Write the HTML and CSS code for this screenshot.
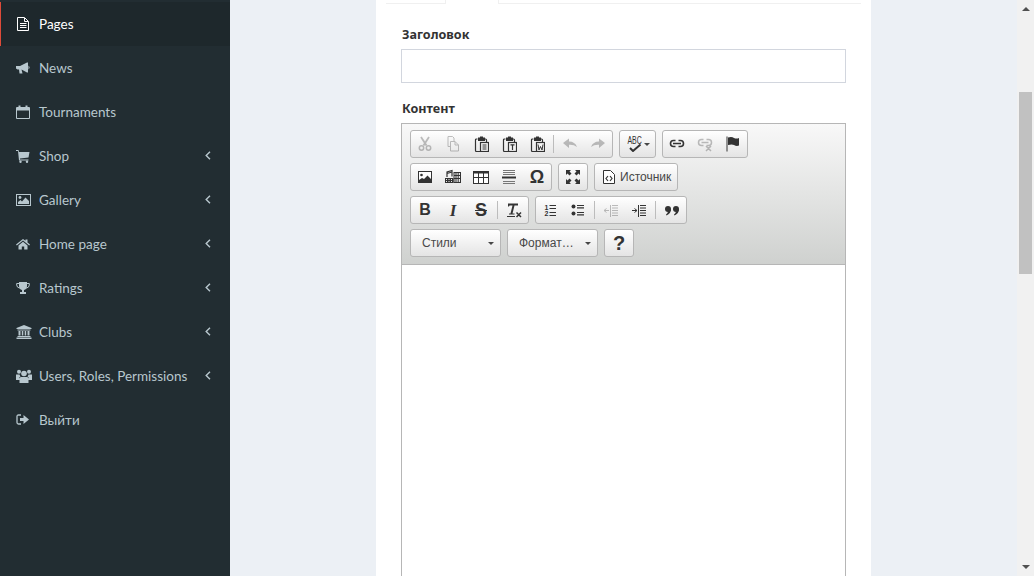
FILE: index.html
```html
<!DOCTYPE html>
<html lang="en">
<head>
    <meta charset="UTF-8">
    <title>Pages</title>
    <link rel="stylesheet" href="styles.css">
</head>
<body>
    <svg class="defs" width="0" height="0">
        <symbol id="clip" viewBox="0 0 16 16">
            <path d="M4.500 3H3.500Q2.500 3 2.500 4V14.500Q2.500 15.500 3.500 15.500H7M11.500 3H12.500Q13.500 3 13.500 4V6" fill="none" stroke="currentColor" stroke-width="1.200"/>
            <path d="M5 1.500H7V.5H10V1.500H12V5H5Z"/>
            <rect x="7.500" y="6.500" width="8" height="9" fill="#f4f4f4" stroke="currentColor" stroke-width="1.200"/>
        </symbol>
    </svg>
    <div class="page">
        <aside class="sidebar">
            <ul class="menu">
                <li class="item active">
                    <svg class="ico" viewBox="0 0 14 14"><path d="M1.500 .5H8.500L12.500 4.500V13.500H1.500ZM8.500 1V4.500H12M4 6.500H10.500M4 8.500H10.500M4 10.500H10.500" fill="none" stroke="currentColor"/></svg>
                    <span class="label">Pages</span>
                </li>
                <li class="item">
                    <svg class="ico" viewBox="0 0 14 14"><path d="M0 5H4L11 1.500H12V11.500H11L5.500 8.500L6.500 12.500H3.500L3 8.500H1.500L0 7.500Z"/><path d="M12.500 4.500Q14.500 6.500 12.500 8.500Z"/></svg>
                    <span class="label">News</span>
                </li>
                <li class="item">
                    <svg class="ico" viewBox="0 0 14 14"><path d="M.5 2.500H13.500V13.500H.5Z" fill="none" stroke="currentColor"/><path d="M1 3H13V5.500H1ZM2.500 .5H4.500V3H2.500ZM9.500 .5H11.500V3H9.500Z"/></svg>
                    <span class="label">Tournaments</span>
                </li>
                <li class="item">
                    <svg class="ico" viewBox="0 0 14 14"><path d="M0 1H2.500L3 3H13.500L12.500 8.500L4 9.500V10.500H12.500V11.500H3L2 2H0Z"/><circle cx="4.500" cy="12.800" r="1.200"/><circle cx="11" cy="12.800" r="1.200"/></svg>
                    <span class="label">Shop</span>
                    <svg class="chev" viewBox="0 0 6 9"><path d="M5 .8L1.200 4.500L5 8.200" fill="none" stroke="currentColor" stroke-width="1.400"/></svg>
                </li>
                <li class="item">
                    <svg class="ico wide" viewBox="0 0 16 14"><rect x=".5" y="1.500" width="14" height="11" fill="none" stroke="currentColor"/><circle cx="4" cy="4.500" r="1.400"/><path d="M2 11V9L4.500 7L6 8.500L9.500 4.500L13 8V11Z"/></svg>
                    <span class="label">Gallery</span>
                    <svg class="chev" viewBox="0 0 6 9"><path d="M5 .8L1.200 4.500L5 8.200" fill="none" stroke="currentColor" stroke-width="1.400"/></svg>
                </li>
                <li class="item">
                    <svg class="ico" viewBox="0 0 14 14"><path d="M7 2L0 7.500L.8 8.500L7 3.500L13.200 8.500L14 7.500L11.500 5.500V2.500H9.500V3.800Z"/><path d="M2.500 8.500L7 4.800L11.500 8.500V12.500H8.200V9.500H5.800V12.500H2.500Z"/></svg>
                    <span class="label">Home page</span>
                    <svg class="chev" viewBox="0 0 6 9"><path d="M5 .8L1.200 4.500L5 8.200" fill="none" stroke="currentColor" stroke-width="1.400"/></svg>
                </li>
                <li class="item">
                    <svg class="ico" viewBox="0 0 14 14"><path d="M3 1H11V5Q11 8 8 9V11H10V13H4V11H6V9Q3 8 3 5Z"/><path d="M3 2.500H.7V4Q.7 6.500 3.800 7.200M11 2.500H13.300V4Q13.300 6.500 10.200 7.200" fill="none" stroke="currentColor"/></svg>
                    <span class="label">Ratings</span>
                    <svg class="chev" viewBox="0 0 6 9"><path d="M5 .8L1.200 4.500L5 8.200" fill="none" stroke="currentColor" stroke-width="1.400"/></svg>
                </li>
                <li class="item">
                    <svg class="ico wide" viewBox="0 0 16 14"><path d="M8 0L15.500 3V4H.5V3ZM1.500 4.500H14.500V5.500H1.500ZM1.500 11H14.500V12H1.500ZM.5 12.500H15.500V14H.5Z"/><path d="M2.500 6H4.500V10.500H2.500ZM5.800 6H7.300V10.500H5.800ZM8.700 6H10.200V10.500H8.700ZM11.500 6H13.500V10.500H11.500Z"/></svg>
                    <span class="label">Clubs</span>
                    <svg class="chev" viewBox="0 0 6 9"><path d="M5 .8L1.200 4.500L5 8.200" fill="none" stroke="currentColor" stroke-width="1.400"/></svg>
                </li>
                <li class="item">
                    <svg class="ico wide" viewBox="0 0 16 14"><circle cx="3" cy="2.800" r="2"/><circle cx="13" cy="2.800" r="2"/><circle cx="8" cy="4.500" r="2.800"/><path d="M0 5.500H3.500L4.500 8H3.500V11H0ZM16 5.500H12.500L11.500 8H12.500V11H16ZM4.500 8H11.500L12.500 9.500V14H3.500V9.500Z"/></svg>
                    <span class="label">Users, Roles, Permissions</span>
                    <svg class="chev" viewBox="0 0 6 9"><path d="M5 .8L1.200 4.500L5 8.200" fill="none" stroke="currentColor" stroke-width="1.400"/></svg>
                </li>
                <li class="item">
                    <svg class="ico" viewBox="0 0 14 14"><path d="M5 2H2.500Q1 2 1 3.500V9.500Q1 11 2.500 11H5" fill="none" stroke="currentColor" stroke-width="1.300"/><path d="M4 5H7.500V2L13 6.500L7.500 11V8H4Z"/></svg>
                    <span class="label">Выйти</span>
                </li>
            </ul>
        </aside>

        <main class="main">
            <div class="card">
                <div class="tabs">
                    <div class="tab-line tab-first"></div>
                    <div class="tab-active"></div>
                    <div class="tab-line tab-rest"></div>
                </div>

                <label class="field-label title-label">Заголовок</label>
                <input class="field" type="text">

                <label class="field-label content-label">Контент</label>
                <div class="editor">
                    <div class="toolbar">
                        <div class="row">
                            <div class="group">
                                <span class="btn off"><svg viewBox="0 0 16 16"><path d="M4 1L9.500 9.500M12 1L6.500 9.500" fill="none" stroke="currentColor" stroke-width="1.800"/><circle cx="4.500" cy="12" r="2.200" fill="none" stroke="currentColor" stroke-width="1.500"/><circle cx="11.500" cy="12" r="2.200" fill="none" stroke="currentColor" stroke-width="1.500"/></svg></span>
                                <span class="btn off"><svg viewBox="0 0 16 16"><path d="M3 .5H7.500L9 2V5.500M5.500 5.500H10L13.500 9V15H5.500ZM3 .5V10.500H5.500M10 5.500V9H13.500" fill="none" stroke="currentColor"/></svg></span>
                                <span class="btn"><svg viewBox="0 0 16 16"><use href="#clip"/><path d="M9.500 9H13.500M9.500 11H13.500M9.500 13H13.500" stroke="currentColor"/></svg></span>
                                <span class="btn"><svg viewBox="0 0 16 16"><use href="#clip"/><path d="M9.500 8.800H13.500M11.500 8.800V14" stroke="currentColor" stroke-width="1.200"/></svg></span>
                                <span class="btn"><svg viewBox="0 0 16 16"><use href="#clip"/><path d="M9 8.500L10 14L11.500 10.500L13 14L14 8.500" fill="none" stroke="currentColor"/></svg></span>
                                <span class="sep"></span>
                                <span class="btn off"><svg viewBox="0 0 16 16"><path d="M1 7L7 2.500V5.500Q13 5.500 15 11Q12 8.500 7 8.800V12Z"/></svg></span>
                                <span class="btn off"><svg viewBox="0 0 16 16"><path d="M15 7L9 2.500V5.500Q3 5.500 1 11Q4 8.500 9 8.800V12Z"/></svg></span>
                            </div>
                            <div class="group">
                                <span class="btn spell"><svg viewBox="0 0 16 16"><text class="icon-abc" x="2" y="8" transform="scale(.7 1)">ABC</text><path d="M4 12L7 15L14.500 8.500" fill="none" stroke="currentColor" stroke-width="2"/></svg><i class="arrow"></i></span>
                            </div>
                            <div class="group">
                                <span class="btn"><svg viewBox="0 0 16 16"><path d="M6.500 4.500H4.500A3 3 0 0 0 4.500 10.500H6.500M9.500 4.500H11.500A3 3 0 0 1 11.500 10.500H9.500M4 7.500H12" fill="none" stroke="currentColor" stroke-width="1.600"/></svg></span>
                                <span class="btn off"><svg viewBox="0 0 16 16"><path d="M6.500 3.500H4.500A3 3 0 0 0 4.500 9.500H6.500M9.500 3.500H11.500A3 3 0 0 1 11.500 9.500H9.500M4.500 6.500H11.500M9 10L14 15M14 10L9 15" fill="none" stroke="currentColor" stroke-width="1.500"/></svg></span>
                                <span class="btn"><svg viewBox="0 0 16 16"><path d="M2 0.500V15.500" fill="none" stroke="currentColor"/><path d="M3 1.500Q7 .5 9 2Q11.500 3 14 2V9.500Q11.500 10.500 9 9Q7 8 3 9Z"/></svg></span>
                            </div>
                        </div>
                        <div class="row">
                            <div class="group">
                                <span class="btn"><svg viewBox="0 0 16 16"><rect x="1.500" y="2.500" width="13" height="11" fill="#fff" stroke="currentColor"/><circle cx="4.500" cy="6" r="1.300"/><path d="M2 13V11L5 9L7 10L10.500 6.500L14 10V13Z"/></svg></span>
                                <span class="btn"><svg viewBox="0 0 16 16"><path d="M0 9H8.500V14H0Z"/><path d="M1 10H2V11H1ZM3.500 10H4.500V11H3.500ZM6 10H7V11H6ZM1 12H2V13H1ZM3.500 12H4.500V13H3.500ZM6 12H7V13H6Z" fill="#eee"/><path d="M2 8V3L7 1.500V7.500M2 4.500L7 3" fill="none" stroke="currentColor" stroke-width="1.200"/><rect x="9" y="3.500" width="6.500" height="10" fill="#e8e8e8" stroke="currentColor"/><path d="M9 6.500H16M9 9.500H16M11 4V13M13.200 4V13" stroke="currentColor"/></svg></span>
                                <span class="btn"><svg viewBox="0 0 16 16"><rect x=".5" y="2.500" width="15" height="12" fill="#fff" stroke="currentColor"/><path d="M.5 3.500H15.500" stroke="currentColor" stroke-width="2"/><path d="M5.500 3V14M10.500 3V14M1 8.500H15" stroke="currentColor"/></svg></span>
                                <span class="btn"><svg viewBox="0 0 16 16"><path d="M2 1.500H14M2 3.500H14M2 5.500H14M2 12.500H14M2 14.500H14" stroke="#777"/><path d="M1 8.500H15" stroke="currentColor" stroke-width="2"/></svg></span>
                                <span class="btn glyph omega">Ω</span>
                            </div>
                            <div class="group">
                                <span class="btn"><svg viewBox="0 0 16 16"><path d="M1 1H6L4.500 2.500L6.500 4.500L4.500 6.500L2.500 4.500L1 6ZM15 1H10L11.500 2.500L9.500 4.500L11.500 6.500L13.500 4.500L15 6ZM1 15H6L4.500 13.500L6.500 11.500L4.500 9.500L2.500 11.500L1 10ZM15 15H10L11.500 13.500L9.500 11.500L11.500 9.500L13.500 11.500L15 10Z"/></svg></span>
                            </div>
                            <div class="group">
                                <span class="btn source"><svg viewBox="0 0 16 16"><path d="M2.500 1.500H9.500L13.500 5.500V14.500H2.500Z" fill="#fff" stroke="currentColor"/><path d="M7 7L5 9.500L7 12M9 7L11 9.500L9 12" fill="none" stroke="currentColor" stroke-width="1.200"/></svg><span class="btn-text">Источник</span></span>
                            </div>
                        </div>
                        <div class="row">
                            <div class="group">
                                <span class="btn glyph bold">B</span>
                                <span class="btn glyph italic">I</span>
                                <span class="btn glyph strike">S</span>
                                <span class="sep"></span>
                                <span class="btn"><svg viewBox="0 0 16 16"><path d="M2 1.500H12V3.500H8.500L6.500 11.500H8.500V12.500H3V11.500H4.500L6.500 3.500H3.500L3 4.500H2ZM1 14H9V15H1Z"/><path d="M10.500 10.500L15 15M15 10.500L10.500 15" fill="none" stroke="currentColor" stroke-width="1.500"/></svg></span>
                            </div>
                            <div class="group">
                                <span class="btn"><svg viewBox="0 0 16 16"><text class="icon-num" x="2.500" y="7.500">1</text><text class="icon-num" x="2.500" y="14">2</text><path d="M7.500 3.500H14M7.500 6.500H14M7.500 10.500H14M7.500 13.500H14" stroke="currentColor" stroke-width="1.200"/></svg></span>
                                <span class="btn"><svg viewBox="0 0 16 16"><circle cx="3.500" cy="4.500" r="2"/><circle cx="3.500" cy="11.500" r="2"/><path d="M7 3.500H14M7 5.800H14M7 10.500H14M7 12.800H14" stroke="currentColor" stroke-width="1.200"/></svg></span>
                                <span class="sep"></span>
                                <span class="btn off"><svg viewBox="0 0 16 16"><path d="M9 3.500H15M9 6H15M9 8.500H15M9 11H15M9 13.500H15M7.500 3V15M1 8.500H6M3.500 6.500L1 8.500L3.500 10.500" fill="none" stroke="currentColor"/></svg></span>
                                <span class="btn"><svg viewBox="0 0 16 16"><path d="M9 3.500H15M9 6H15M9 8.500H15M9 11H15M9 13.500H15M7.500 3V15M1 8.500H6M3.500 6.500L6 8.500L3.500 10.500" fill="none" stroke="currentColor"/></svg></span>
                                <span class="sep"></span>
                                <span class="btn"><svg viewBox="0 0 16 16"><circle cx="4" cy="7" r="3"/><circle cx="12" cy="7" r="3"/><path d="M7 7Q7 11.500 2.500 13.500L2 12.500Q4 11 4 9ZM15 7Q15 11.500 10.500 13.500L10 12.500Q12 11 12 9Z"/></svg></span>
                            </div>
                        </div>
                        <div class="row">
                            <div class="group combo"><span class="combo-text">Стили</span><i class="arrow"></i></div>
                            <div class="group combo"><span class="combo-text">Формат…</span><i class="arrow"></i></div>
                            <div class="group"><span class="btn glyph help">?</span></div>
                        </div>
                    </div>
                    <div class="edit-area"></div>
                </div>
            </div>
        </main>

        <div class="scrollbar">
            <i class="sb-up"></i>
            <div class="sb-track"><div class="sb-thumb"></div></div>
            <i class="sb-down"></i>
        </div>
    </div>
</body>
</html>
```

FILE: styles.css
```css
*{
    margin: 0;
    padding: 0;
    box-sizing: border-box;
}
ul{
    list-style: none;
}
html,body{
    height: 100%;
    overflow: hidden;
}
body{
    font-family: "Noto Sans", "Open Sans", sans-serif;
    font-size: 13px;
    color: #333;
    background: #ecf0f5;
}
.defs{
    position: absolute;
}
.page{
    display: flex;
    height: 576px;
    overflow: hidden;
}

/* sidebar */
.sidebar{
    flex: 0 0 230px;
    background: #222d32;
    padding-top: 2px;
}
.item{
    display: flex;
    align-items: center;
    height: 44px;
    padding-left: 16px;
    color: #b8c7ce;
}
.item.active{
    background: #1e282c;
    color: #fff;
    border-left: 1px solid #dd4b39;
    padding-left: 15px;
}
.ico{
    flex: 0 0 14px;
    width: 14px;
    height: 14px;
    margin-right: 9px;
    fill: currentColor;
}
.ico.wide{
    flex-basis: 16px;
    width: 16px;
    margin-right: 7px;
}
.label{
    flex: 1;
    font-family: Lato, "Noto Sans", sans-serif;
    font-size: 13.500px;
    line-height: 18px;
    white-space: nowrap;
}
.chev{
    width: 6px;
    height: 9px;
    margin-right: 19px;
    margin-top: -1px;
}

/* form card */
.main{
    flex: 1;
    padding-left: 146px;
    overflow: hidden;
}
.card{
    width: 495px;
    height: 640px;
    background: #fff;
    padding: 0 25px;
}
.tabs{
    display: flex;
    height: 4px;
    margin: 0 -15px 0 -15px;
}
.tab-line{
    height: 4px;
    border-bottom: 1px solid #f0f0f0;
}
.tab-first{
    width: 59px;
}
.tab-active{
    width: 54px;
    border-left: 1px solid #f0f0f0;
    border-right: 1px solid #f0f0f0;
}
.tab-rest{
    flex: 1;
}
.field-label{
    display: block;
    font-weight: 700;
    font-size: 12.600px;
    line-height: 18px;
    padding-left: 1px;
    color: #333;
}
.title-label{
    margin-top: 22px;
}
.field{
    display: block;
    width: 100%;
    height: 34px;
    margin-top: 5px;
    border: 1px solid #d2d6de;
    background: #fff;
}
.content-label{
    margin-top: 17px;
}

/* editor */
.editor{
    margin-top: 5px;
    height: 500px;
    border: 1px solid #b6b6b6;
}
.toolbar{
    padding: 6px 8px 2px;
    background: linear-gradient(#f8f8f8, #cfd1cf);
    border-bottom: 1px solid #b6b6b6;
    height: 141px;
    color: #474747;
    font-family: "Liberation Sans", Arial, sans-serif;
    font-size: 12px;
}
.row{
    display: flex;
    gap: 6px;
    margin-bottom: 5px;
}
.group{
    display: flex;
    align-items: center;
    height: 28px;
    border: 1px solid #b6b6b6;
    border-radius: 3px;
    background: linear-gradient(#fff, #e4e4e4);
}
.btn{
    display: flex;
    align-items: center;
    justify-content: center;
    width: 28px;
    height: 26px;
    color: #333;
}
.btn svg{
    width: 16px;
    height: 16px;
    fill: currentColor;
}
.btn.off{
    opacity: .3;
}
.sep{
    width: 1px;
    height: 18px;
    margin: 0 2px;
    background: #bcbcbc;
}
.arrow{
    display: block;
    width: 0;
    height: 0;
    border-left: 3px solid transparent;
    border-right: 3px solid transparent;
    border-top: 3px solid #474747;
}
.btn.spell{
    width: 35px;
    padding-left: 1px;
    gap: 2px;
}
.icon-abc{
    font-family: "Liberation Sans", sans-serif;
    font-size: 10px;
}
.icon-num{
    font-family: "Liberation Sans", sans-serif;
    font-size: 7px;
    font-weight: 700;
}
.btn.source{
    width: 82px;
    justify-content: flex-start;
    padding-left: 6px;
    gap: 3px;
}
.btn-text{
    color: #474747;
}
.glyph{
    font-weight: 700;
    font-size: 16px;
    line-height: 1;
}
.omega{
    font-family: "Liberation Sans", sans-serif;
    font-size: 18px;
}
.bold{
    font-family: "Liberation Sans", sans-serif;
    font-size: 16px;
}
.italic{
    font-family: "Liberation Serif", serif;
    font-style: italic;
    font-size: 17px;
}
.strike{
    font-family: "Liberation Sans", sans-serif;
    text-decoration: line-through;
    text-decoration-thickness: 1px;
    font-size: 18px;
}
.help{
    font-size: 20px;
}
.combo{
    width: 91px;
    padding: 0 6px 0 11px;
    justify-content: space-between;
    color: #484848;
}
.edit-area{
    background: #fff;
}

/* fake page scrollbar */
.scrollbar{
    flex: 0 0 17px;
    display: flex;
    flex-direction: column;
    align-items: center;
    background: #f1f1f1;
}
.sb-up,.sb-down{
    display: block;
    width: 0;
    height: 0;
    flex: none;
    border-left: 4px solid transparent;
    border-right: 4px solid transparent;
}
.sb-up{
    margin-top: 7px;
    border-bottom: 4px solid #505050;
}
.sb-down{
    margin-bottom: 7px;
    border-top: 4px solid #505050;
}
.sb-track{
    flex: 1;
    width: 13px;
    padding-top: 81px;
}
.sb-thumb{
    height: 182px;
    background: #c1c1c1;
}
```
